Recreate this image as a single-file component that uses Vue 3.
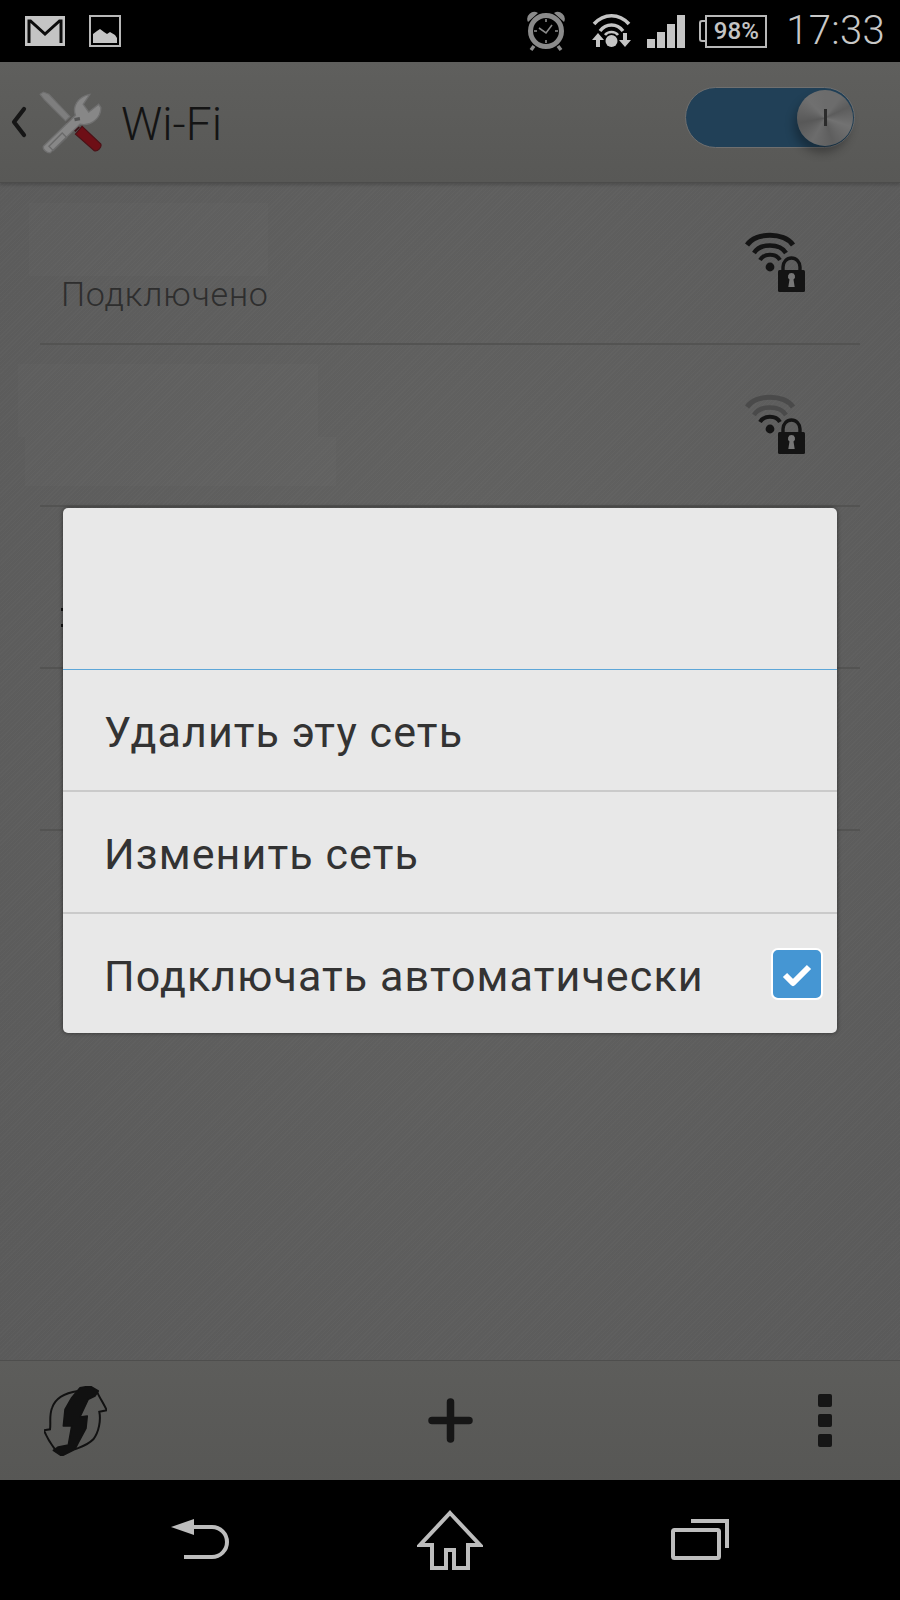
<template>
  <div class="phone">
    <div class="status-bar">
      <svg class="ic-mail" width="40" height="30" viewBox="0 0 40 30">
        <rect width="40" height="30" fill="#c4c4c4" />
        <path d="M4 27V5h1.500L20 18 34.500 5H36v22" fill="none" stroke="#0c0c0c" stroke-width="3" />
      </svg>
      <svg class="ic-photo" width="32" height="32" viewBox="0 0 32 32">
        <rect x="1" y="1" width="30" height="30" fill="#000" stroke="#b8b8b8" stroke-width="2" />
        <path d="M4 28V19l4-3 3-2 4 3 3 2 3-2 5 3 2 3v5z" fill="#c4c4c4" />
      </svg>
      <div class="spacer"></div>
      <svg class="ic-alarm" width="40" height="42" viewBox="0 0 40 42">
        <path d="M2 12a7 7 0 0 1 10-9zM38 12a7 7 0 0 0-10-9z" fill="#8a8a8a" />
        <circle cx="20" cy="21" r="15.500" fill="#000" stroke="#8a8a8a" stroke-width="5" />
        <path d="M20 9v3M20 30v3M8 21h3M29 21h3" stroke="#8a8a8a" stroke-width="1.600" />
        <path d="M13 18l7 5 6-8" fill="none" stroke="#8a8a8a" stroke-width="1.600" />
        <path d="M8 36l-3 4M32 36l3 4" stroke="#8a8a8a" stroke-width="3.500" />
      </svg>
      <svg class="ic-wifi" width="39" height="36" viewBox="0 0 39 36">
        <path d="M2 12C12 1 27 1 37 12" fill="none" stroke="#c4c4c4" stroke-width="3.600" />
        <path d="M8 19C14 11 25 11 31 19" fill="none" stroke="#c4c4c4" stroke-width="3.400" />
        <path d="M13 23C16 19 23 19 26 23" fill="none" stroke="#c4c4c4" stroke-width="2.600" />
        <circle cx="19.500" cy="29" r="6" fill="#c4c4c4" />
        <path d="M6 21l6 7H8v7H4v-7H0zM33 35l6-7h-4v-7h-4v7h-4z" fill="#c4c4c4" />
      </svg>
      <div class="signal">
        <i style="height: 9px"></i>
        <i style="height: 16px"></i>
        <i style="height: 24px"></i>
        <i style="height: 33px"></i>
      </div>
      <div class="battery">
        <span class="battery-nub"></span>
        <span class="battery-body">98%</span>
      </div>
      <span class="clock">17:33</span>
    </div>

    <div class="action-bar">
      <svg class="ic-chevron" width="16" height="32" viewBox="0 0 16 32">
        <path d="M13 3L3 16l10 13" fill="none" stroke="#161616" stroke-width="4.200" stroke-linejoin="round" stroke-linecap="round" />
      </svg>
      <svg class="ic-tools" width="63" height="63" viewBox="0 0 57 57">
        <path d="M1 3l3-2 5 2 19 20-4 4L5 8z" fill="#7e7e7e" stroke="#707070" />
        <path d="M25 29l4-4 8 8-4 4z" fill="#3b1418" />
        <path d="M33 39l6-7 17 16c1 3-3 7-6 6z" fill="#6e0f16" stroke="#4a1217" />
        <path d="M4 50L33 22c-3-8 2-17 13-19l-6 9 5 7 9-7 2 3c0 10-9 17-19 15L10 56c-3 0-7-3-6-6z" fill="#878787" stroke="#707070" stroke-width="1.200" />
        <path d="M9 50l12-12 4 4-12 12z" fill="none" stroke="#6a6a6a" stroke-width="1.200" />
        <rect x="32" y="24" width="5" height="3" fill="#555" transform="rotate(-10 34 25)" />
      </svg>
      <span class="title">Wi-Fi</span>
      <div class="toggle">
        <div class="knob"><i></i></div>
      </div>
    </div>

    <div class="list">
      <div class="patch patch-a"></div>
      <div class="patch patch-b"></div>
      <div class="patch patch-c"></div>
      <div v-for="(row, index) in rows" :key="index" class="row">
        <span class="row-status">{{ row.status }}</span>
        <svg v-if="row.icon" class="ic-lock" width="60" height="60" viewBox="0 0 60 60">
          <path d="M2 13C11 0 39 0 48 13" fill="none" :stroke="row.outer" stroke-width="5" />
          <path d="M9 21C15 11 35 11 41 21" fill="none" :stroke="row.outer" stroke-width="4.400" />
          <path d="M15 28C19 21 31 21 35 28" fill="none" stroke="#141414" stroke-width="4" />
          <circle cx="25" cy="35" r="4.400" fill="#141414" />
          <path d="M38 40V35a8.500 9 0 0 1 17 0v5" fill="none" stroke="#141414" stroke-width="3.400" />
          <rect x="33" y="38" width="27" height="22" rx="1.500" fill="#141414" />
          <path d="M46.500 41a3.500 3.500 0 0 1 2 6.400l1.200 7.600h-6.400l1.200-7.600a3.500 3.500 0 0 1 2-6.400z" fill="#777" />
        </svg>
      </div>
      <i class="cut-dot dot-a"></i>
      <i class="cut-dot dot-b"></i>
    </div>

    <div class="bottom-bar">
      <svg class="ic-sync" width="63" height="70" viewBox="0 0 63 70">
        <path d="M34 5C20 7 11 13 8 22 5 30 7 37 6 43.300L0 44.300C3 52 7 58 11 63.300" fill="none" stroke="#111" stroke-width="2" />
        <path d="M52.700 5C55 11 60 18 62.700 24.300L55.300 25.700C57 34 55 46 49.300 53.300 44 59 37 61 31 63.300" fill="none" stroke="#111" stroke-width="2" />
        <path d="M36 1.700L46 0 54.300 5 51 10 44.300 13.300 36 31 43.300 30 42 42.300 34.300 56.700 31 63.300 17.700 70 9.300 64.300 14.300 61 24.300 59 27.700 40 19.300 40 21 23.300 27.700 11.700z" fill="#111" stroke="#111" stroke-linejoin="round" stroke-width="1.500" />
      </svg>
      <svg class="ic-plus" width="45" height="45" viewBox="0 0 45 45">
        <path d="M4 22.500h37M22.500 4v37" stroke="#161616" stroke-width="7.500" stroke-linecap="round" />
      </svg>
      <div class="more">
        <i></i>
        <i></i>
        <i></i>
      </div>
    </div>

    <div class="nav-bar">
      <svg width="58" height="42" viewBox="0 0 58 42">
        <path d="M0 8l23-8v16z" fill="#bdbdbd" />
        <path d="M18 8h23a15 15 0 0 1 0 30H13" fill="none" stroke="#bdbdbd" stroke-width="4" />
      </svg>
      <svg width="66" height="60" viewBox="0 0 66 60">
        <path d="M33 3L63 35H51V58H37V40H29V58H15V35H3z" fill="none" stroke="#bdbdbd" stroke-width="4" />
      </svg>
      <svg width="58" height="42" viewBox="0 0 58 42">
        <path d="M20 2h36v27" fill="none" stroke="#bdbdbd" stroke-width="4" />
        <rect x="2" y="11" width="46" height="28" rx="1.500" fill="none" stroke="#bdbdbd" stroke-width="4" />
      </svg>
    </div>

    <div class="dialog">
      <div class="dialog-title"></div>
      <div v-for="item in items" :key="item.label" class="dialog-item">
        <span class="dialog-label">{{ item.label }}</span>
        <span v-if="item.checked" class="checkbox">
          <svg width="32" height="26" viewBox="0 0 32 26">
            <path d="M4 14l8 8L28 6" fill="none" stroke="#fff" stroke-width="6" stroke-linejoin="round" />
          </svg>
        </span>
      </div>
    </div>
  </div>
</template>

<script setup>
const rows = [
  { status: 'Подключено', icon: true, outer: '#141414' },
  { status: '', icon: true, outer: '#4a4a4a' },
  { status: '', icon: false },
  { status: '', icon: false }
]

const items = [
  { label: 'Удалить эту сеть' },
  { label: 'Изменить сеть' },
  { label: 'Подключать автоматически', checked: true }
]
</script>

<style scoped>
.phone {
  position: relative;
  display: flex;
  flex-direction: column;
  width: 900px;
  height: 1600px;
  overflow: hidden;
  background: #000;
  font-family: Roboto, "Liberation Sans", sans-serif;
}

.status-bar {
  display: flex;
  align-items: center;
  flex: none;
  height: 62px;
  padding: 0 15px 0 25px;
  background: #000;
}

.ic-mail {
  margin-top: -1px;
}

.ic-photo {
  margin-left: 24px;
}

.spacer {
  flex: 1;
}

.ic-wifi {
  margin-left: 26px;
  margin-top: -2px;
}

.signal {
  display: flex;
  align-items: flex-end;
  gap: 2px;
  width: 39px;
  margin-left: 16px;
  margin-top: 1px;
}

.signal i {
  display: block;
  width: 8px;
  background: #c4c4c4;
}

.battery {
  display: flex;
  align-items: center;
  margin-left: 13px;
}

.battery-nub {
  display: block;
  width: 6px;
  height: 22px;
  border: 2px solid #b8b8b8;
  border-right: none;
  border-radius: 3px 0 0 3px;
  box-sizing: border-box;
}

.battery-body {
  display: block;
  width: 62px;
  height: 33px;
  box-sizing: border-box;
  border: 2px solid #b8b8b8;
  color: #c4c4c4;
  font-size: 24px;
  font-weight: 500;
  line-height: 29px;
  text-align: center;
}

.clock {
  margin-left: 19px;
  color: #c8c8c8;
  font-size: 40px;
  font-weight: 300;
  letter-spacing: 0.3px;
  line-height: 1;
}

.action-bar {
  display: flex;
  align-items: center;
  flex: none;
  height: 121px;
  padding: 0 45px 0 11px;
  box-sizing: border-box;
  border-bottom: 1px solid #4c4c4b;
  background: linear-gradient(#5f5f5d, #585856);
  box-shadow: 0 2px 3px rgba(0, 0, 0, 0.18);
  z-index: 1;
}

.ic-tools {
  margin-left: 12px;
}

.title {
  margin-left: 19px;
  margin-top: 3px;
  color: #141414;
  font-size: 46px;
  font-weight: 300;
}

.toggle {
  display: flex;
  align-items: center;
  justify-content: flex-end;
  width: 170px;
  height: 61px;
  margin-left: auto;
  margin-bottom: 9px;
  box-sizing: border-box;
  border: 1px solid #6f6f6f;
  border-radius: 31px;
  background: #214057;
}

.knob {
  display: flex;
  align-items: center;
  justify-content: center;
  width: 56px;
  height: 56px;
  margin-right: 1px;
  border-radius: 50%;
  background: conic-gradient(#6c6c6c 0 10%, #5c5c5c 18%, #727272 30%, #5e5e5e 45%, #6c6c6c 58%, #585858 72%, #707070 88%, #6c6c6c);
  box-shadow: -3px 7px 10px rgba(0, 0, 0, 0.3);
}

.knob i {
  display: block;
  width: 3px;
  height: 17px;
  background: #2b2b2b;
}

.list {
  position: relative;
  flex: 1;
  padding: 0 40px;
  background:
    repeating-linear-gradient(135deg, rgba(255, 255, 255, 0.012) 0 1px, rgba(0, 0, 0, 0.012) 1px 3px),
    radial-gradient(ellipse at 50% 40%, #636362, #5b5b5b);
}

.row {
  display: flex;
  align-items: flex-end;
  justify-content: space-between;
  height: 162px;
  box-sizing: border-box;
  padding: 0 55px 51px 21px;
  border-bottom: 2px solid #535352;
}

.row:first-of-type {
  height: 160px;
}

.row-status {
  margin-bottom: -22px;
  color: #2e2e2e;
  font-size: 34px;
  font-weight: 300;
  letter-spacing: 0.8px;
  line-height: 40px;
}

.patch {
  position: absolute;
  background: rgba(255, 255, 255, 0.015);
}

.patch-a {
  left: 29px;
  top: 20px;
  width: 239px;
  height: 73px;
}

.patch-b {
  left: 18px;
  top: 181px;
  width: 300px;
  height: 73px;
}

.patch-c {
  left: 25px;
  top: 254px;
  width: 311px;
  height: 49px;
}

.cut-dot {
  position: absolute;
  left: 61px;
  width: 3px;
  height: 3px;
  background: #141414;
}

.dot-a {
  top: 425px;
}

.dot-b {
  top: 441px;
}

.bottom-bar {
  display: grid;
  grid-template-columns: 1fr auto 1fr;
  align-items: center;
  flex: none;
  height: 120px;
  padding: 0 44px;
  box-sizing: border-box;
  border-top: 1px solid #4e4e4d;
  background: linear-gradient(#5d5d5b, #575755);
}

.more {
  display: flex;
  flex-direction: column;
  justify-self: end;
  gap: 7px;
  margin-right: 24px;
}

.more i {
  display: block;
  width: 14px;
  height: 13px;
  border-radius: 2px;
  background: #161616;
}

.nav-bar {
  display: flex;
  align-items: center;
  justify-content: space-between;
  flex: none;
  height: 120px;
  padding: 0 171px;
  background: #000;
}

.dialog {
  position: absolute;
  left: 63px;
  top: 508px;
  width: 774px;
  height: 525px;
  overflow: hidden;
  border-radius: 5px;
  background: #e8e8e8;
  box-shadow: 0 0 4px rgba(0, 0, 0, 0.5);
  z-index: 2;
}

.dialog-title {
  height: 162px;
  box-sizing: border-box;
  border-bottom: 1px solid #5da6d8;
}

.dialog-item {
  display: flex;
  align-items: center;
  justify-content: space-between;
  height: 122px;
  box-sizing: border-box;
  padding: 0 14px 0 41px;
  border-bottom: 2px solid #cacaca;
  color: #333;
  font-size: 43px;
  letter-spacing: 1.1px;
}

.dialog-item:last-child {
  height: 119px;
  border-bottom: none;
}

.dialog-label {
  margin-top: 4px;
}

.checkbox {
  display: flex;
  align-items: center;
  justify-content: center;
  width: 52px;
  height: 52px;
  box-sizing: border-box;
  border: 2px solid #fff;
  border-radius: 7px;
  background: #4596d3;
}
</style>
